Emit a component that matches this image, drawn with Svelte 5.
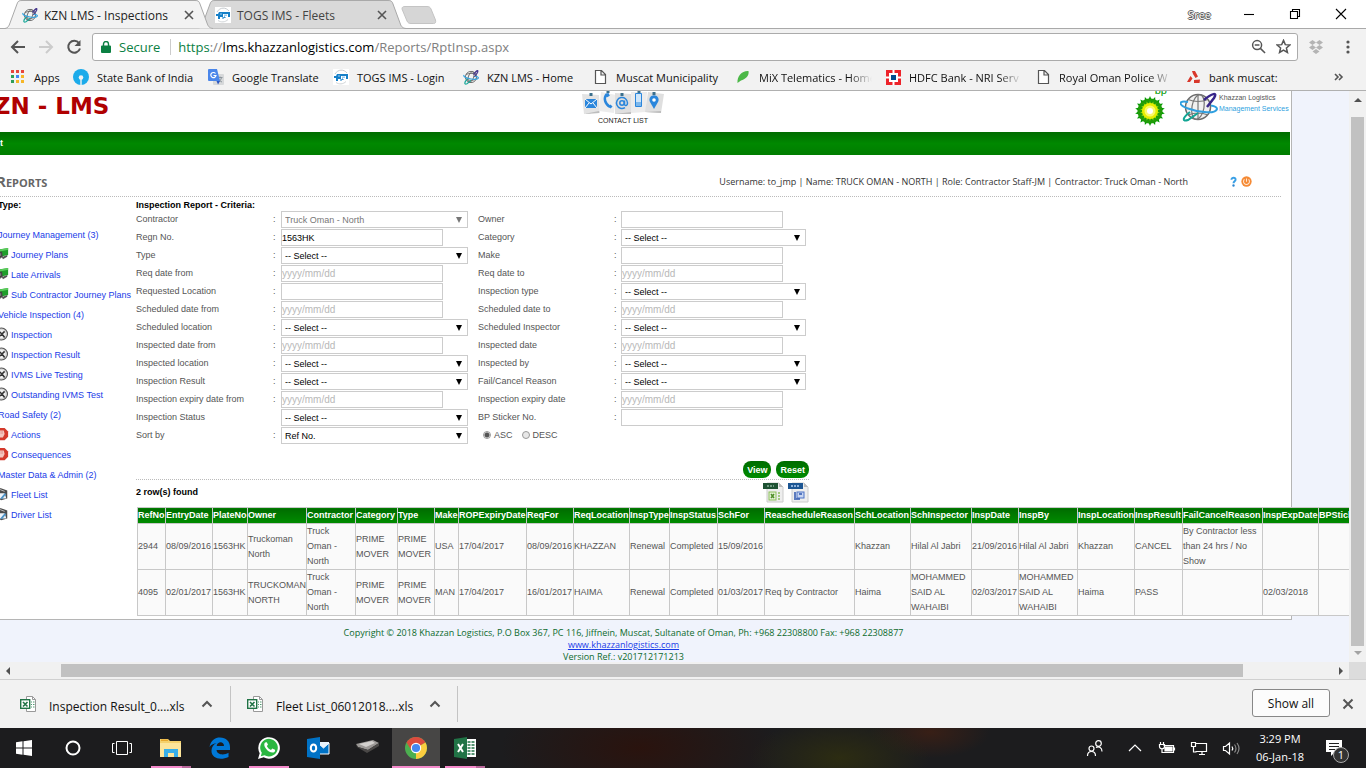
<script>
  const tabs = [
    { title: 'KZN LMS - Inspections', icon: 'globe', active: true },
    { title: 'TOGS IMS - Fleets', icon: 'togs', active: false }
  ]

  // space is the room each bookmark takes on the bar
  const bookmarks = [
    { title: 'Apps', icon: 'apps', space: 63 },
    { title: 'State Bank of India', icon: 'sbi', space: 135 },
    { title: 'Google Translate', icon: 'translate', space: 125 },
    { title: 'TOGS IMS - Login', icon: 'togs', space: 130 },
    { title: 'KZN LMS - Home', icon: 'globe', space: 129 },
    { title: 'Muscat Municipality', icon: 'page', space: 143 },
    { title: 'MiX Telematics - Home', icon: 'leaf', space: 150, fade: true },
    { title: 'HDFC Bank - NRI Serv', icon: 'hdfc', space: 150, fade: true },
    { title: 'Royal Oman Police W', icon: 'page', space: 150, fade: true },
    { title: 'bank muscat:', icon: 'muscat', space: 110 }
  ]

  const menu = [
    { title: 'Journey Management (3)' },
    { title: 'Journey Plans', icon: 'journey' },
    { title: 'Late Arrivals', icon: 'journey' },
    { title: 'Sub Contractor Journey Plans', icon: 'journey' },
    { title: 'Vehicle Inspection (4)' },
    { title: 'Inspection', icon: 'wheel' },
    { title: 'Inspection Result', icon: 'wheel' },
    { title: 'IVMS Live Testing', icon: 'wheel' },
    { title: 'Outstanding IVMS Test', icon: 'wheel' },
    { title: 'Road Safety (2)' },
    { title: 'Actions', icon: 'stop' },
    { title: 'Consequences', icon: 'stop' },
    { title: 'Master Data & Admin (2)' },
    { title: 'Fleet List', icon: 'data' },
    { title: 'Driver List', icon: 'data' }
  ]

  const any = '-- Select --'

  const fields = [
    { label: 'Contractor', type: 'select', value: 'Truck Oman - North', disabled: true },
    { label: 'Owner', type: 'text' },
    { label: 'Regn No.', type: 'text', value: '1563HK' },
    { label: 'Category', type: 'select', value: any },
    { label: 'Type', type: 'select', value: any },
    { label: 'Make', type: 'text' },
    { label: 'Req date from', type: 'date' },
    { label: 'Req date to', type: 'date' },
    { label: 'Requested Location', type: 'text' },
    { label: 'Inspection type', type: 'select', value: any },
    { label: 'Scheduled date from', type: 'date' },
    { label: 'Scheduled date to', type: 'date' },
    { label: 'Scheduled location', type: 'select', value: any },
    { label: 'Scheduled Inspector', type: 'select', value: any },
    { label: 'Inspected date from', type: 'date' },
    { label: 'Inspected date', type: 'date' },
    { label: 'Inspected location', type: 'select', value: any },
    { label: 'Inspected by', type: 'select', value: any },
    { label: 'Inspection Result', type: 'select', value: any },
    { label: 'Fail/Cancel Reason', type: 'select', value: any },
    { label: 'Inspection expiry date from', type: 'date' },
    { label: 'Inspection expiry date', type: 'date' },
    { label: 'Inspection Status', type: 'select', value: any, bare: true },
    { label: 'BP Sticker No.', type: 'text' },
    { label: 'Sort by', type: 'select', value: 'Ref No.' }
  ]

  const columns = [
    ['RefNo', 28], ['EntryDate', 47], ['PlateNo', 35], ['Owner', 59],
    ['Contractor', 49], ['Category', 42], ['Type', 37], ['Make', 24],
    ['ROPExpiryDate', 68], ['ReqFor', 47], ['ReqLocation', 56], ['InspType', 40],
    ['InspStatus', 48], ['SchFor', 47], ['ReascheduleReason', 90], ['SchLocation', 56],
    ['SchInspector', 61], ['InspDate', 47], ['InspBy', 59], ['InspLocation', 57],
    ['InspResult', 48], ['FailCancelReason', 80], ['InspExpDate', 56], ['BPSticker', 60]
  ]

  const rows = [
    ['2944', '08/09/2016', '1563HK', 'Truckoman North', 'Truck Oman - North', 'PRIME MOVER',
      'PRIME MOVER', 'USA', '17/04/2017', '08/09/2016', 'KHAZZAN', 'Renewal', 'Completed',
      '15/09/2016', '', 'Khazzan', 'Hilal Al Jabri', '21/09/2016', 'Hilal Al Jabri', 'Khazzan',
      'CANCEL', 'By Contractor less than 24 hrs / No Show', '', ''],
    ['4095', '02/01/2017', '1563HK', 'TRUCKOMAN NORTH', 'Truck Oman - North', 'PRIME MOVER',
      'PRIME MOVER', 'MAN', '17/04/2017', '16/01/2017', 'HAIMA', 'Renewal', 'Completed',
      '01/03/2017', 'Req by Contractor', 'Haima', 'MOHAMMED SAID AL WAHAIBI', '02/03/2017',
      'MOHAMMED SAID AL WAHAIBI', 'Haima', 'PASS', '', '02/03/2018', '']
  ]

  const tableWidth = columns.reduce((sum, c) => sum + c[1], 1)

  const downloads = ['Inspection Result_0....xls', 'Fleet List_06012018....xls']

  const apps = [
    { name: 'Start', icon: 'windows' },
    { name: 'Cortana', icon: 'cortana' },
    { name: 'Task View', icon: 'taskview' },
    { name: 'File Explorer', icon: 'explorer', state: 'many' },
    { name: 'Edge', icon: 'edge' },
    { name: 'WhatsApp', icon: 'whatsapp', state: 'open' },
    { name: 'Outlook', icon: 'outlook' },
    { name: 'Scanner', icon: 'scanner' },
    { name: 'Chrome', icon: 'chrome', state: 'current' },
    { name: 'Excel', icon: 'excel', state: 'many' }
  ]

  let order = 'ASC'
</script>

{#snippet icon(name)}
  <svg class="icon" viewBox="0 0 16 16" aria-hidden="true">
    {#if name === 'globe'}
      <g fill="none" stroke="#666" stroke-width="0.9">
        <circle cx="8" cy="8" r="5.6" />
        <ellipse cx="8" cy="8" rx="2.6" ry="5.6" transform="rotate(20 8 8)" />
        <path d="M3 5.500C6 4 10 4 13 5.500M2.600 9.500C6 12 10 12 13.400 9.500" />
      </g>
      <path d="M10.500 5.500C14 1 15.500 .5 14.500 3.500L11.500 8" fill="none" stroke="#4a3b8f" stroke-width="1.300" />
      <path d="M1 6C-1 9 14 12 15.500 9C15.500 8 13 7.500 12 7.500" fill="none" stroke="#35a4e0" stroke-width="1.200" />
      <path d="M4.500 10C1 13 1 16 4 14.800L8 11.500" fill="none" stroke="#1aa89a" stroke-width="1.200" />
    {:else if name === 'togs'}
      <rect width="16" height="16" fill="#fff" />
      <path d="M2 5C5 0 11 0 14 4" fill="none" stroke="#c6cbcf" />
      <path d="M4 5h11v5h-2V7H8v3H5v2H3V9H1V7h2z" fill="#1780c8" />
      <path d="M5 6.500h2v1H5zM9 7.500h3v1.500H9z" fill="#9ccdf0" />
      <path d="M7 11h2v-1h1v1" fill="none" stroke="#1780c8" />
      <path d="M3 13.500C6 15.500 10 15.500 13 12.500" fill="none" stroke="#d0d4d7" />
    {:else if name === 'apps'}
      {#each ['#e8453c', '#e8453c', '#e8453c', '#2f9e58', '#4285f4', '#f6b626', '#2f9e58', '#f6b626', '#f6b626'] as color, i}
        <rect x={1 + (i % 3) * 5} y={1 + Math.floor(i / 3) * 5} width="3" height="3" fill={color} />
      {/each}
    {:else if name === 'sbi'}
      <circle cx="8" cy="8" r="8" fill="#1cabea" />
      <circle cx="8" cy="8.500" r="2.300" fill="#f2f2f2" />
      <path d="M7.300 9h1.400v7H7.300z" fill="#f2f2f2" />
    {:else if name === 'translate'}
      <rect x="5" y="5" width="11" height="11" rx="1" fill="#d6d8da" />
      <path d="M9.500 8.500h5M12 7.500v1M13.500 8.500c-.5 2.500-2 4-3.500 4.500M10.500 9.500c.5 1.500 2 3 3.500 3.500" fill="none" stroke="#8b949b" />
      <path d="M1 0h8l3 12H1a1 1 0 0 1-1-1V1a1 1 0 0 1 1-1z" fill="#4a86ea" />
      <path d="M8.500 12H12l-2 3.500z" fill="#2b56c2" />
      <path d="M7.500 4.500A2.600 2.600 0 1 0 8 6.500H5.500" fill="none" stroke="#fff" stroke-width="1.200" />
    {:else if name === 'page'}
      <path d="M3.500 1.500h6l4 4v9h-10zM9 1.500v4.500h4.500" fill="#fff" stroke="#555" stroke-width="1.200" />
    {:else if name === 'leaf'}
      <path d="M2.500 14C2 7 7 1.500 13.500 2C14.500 7 10 10.500 6 11.500z" fill="#4cb848" />
    {:else if name === 'hdfc'}
      <rect x="1" y="1" width="15" height="15" fill="#ed232a" />
      <path d="M4 4h9v9H4z" fill="#fff" />
      <path d="M7.500 1h2v4h-2zM7.500 12h2v4h-2zM1 7.500h4v2H1zM12 7.500h4v2h-4z" fill="#fff" />
      <rect x="6" y="6" width="5" height="5" fill="#004c8f" />
    {:else if name === 'muscat'}
      <path d="M7 2h3l3 5.500-2.500 1.500L8 5zM5.500 7l2 2.500L5 13H2zM9 11l6-.5-.5 3.500H9z" fill="#d8372b" />
    {:else if name === 'journey'}
      <path d="M3 3l12-2V9L6 11z" fill="#1f9e2b" />
      <path d="M5 3l10-2v2L6 5z" fill="#5ccc5c" />
      <path d="M0 6l8-1 1 7-9 1z" fill="#444" />
      <path d="M1 8l6-1v3l-6 1z" fill="#777" />
      <circle cx="4" cy="12.500" r="2.200" fill="#222" />
      <path d="M8 11.500l6-2.500v2l-5 3z" fill="#555" />
    {:else if name === 'wheel'}
      <circle cx="7.500" cy="8" r="6.800" fill="#d4d4d4" stroke="#555" stroke-width="1.200" />
      <circle cx="7.500" cy="8" r="4.600" fill="#f2f2f2" />
      <path d="M4 4.500l4 3.500 3-3M8 8l3 4M8 8l-3.500 3" stroke="#333" stroke-width="1.800" fill="none" />
    {:else if name === 'stop'}
      <path d="M4 1h7l4 4v6l-4 4H4l-4-4V5z" fill="#d43a2c" />
      <path d="M3 4h7l1 4-2 4H5l-2-3z" fill="#f3c7c0" />
      <path d="M5.500 4v4M8 4v4" stroke="#e08a80" />
    {:else if name === 'data'}
      <path d="M1 7l5-6 8 3v9l-7 2-6-3z" fill="#4c4c4c" />
      <path d="M3 7h8l2 6H3z" fill="#eef4fa" />
      <path d="M6 13l5-6 2 1-5 6z" fill="#4f94c8" />
      <path d="M3 6l3-3 5 2" stroke="#ccc" fill="none" />
    {:else if name === 'help'}
      <path d="M5 5.500C5 1.500 11.500 1.500 11 5.500C10.800 7.500 8 8 8 10.500" fill="none" stroke="#3aa0e6" stroke-width="2.800" />
      <circle cx="8" cy="13.800" r="1.700" fill="#2c86d0" />
    {:else if name === 'power'}
      <circle cx="8" cy="8" r="7.500" fill="#f58a35" />
      <path d="M5 5a4.300 4.300 0 1 0 6 0M8 3.500v5" fill="none" stroke="#ffe9d6" stroke-width="1.500" />
    {:else if name === 'xls'}
      <path d="M6.500 .500h6l3 3v12h-9z" fill="#fff" stroke="#999" />
      <path d="M12.500 .500v3h3" fill="none" stroke="#999" />
      <path d="M11 6h1M13 6h1.500M11 8.500h1M13 8.500h1.500M11 11h1M13 11h1.500" stroke="#4f9a71" />
      <rect x="0.700" y="3.700" width="9" height="8.600" fill="#fff" stroke="#217346" stroke-width="1.400" />
      <path d="M3 6l4.500 4.500M7.500 6L3 10.500" stroke="#217346" stroke-width="1.600" />
    {/if}
  </svg>
{/snippet}

{#snippet appIcon(name)}
  <svg class="app-icon" viewBox="0 0 24 24" aria-hidden="true">
    {#if name === 'windows'}
      <path d="M4 6.300l6.500-1v6.200H4zM11.500 5.200L20 4v7.500h-8.500zM4 12.500h6.500v6.200l-6.500-1zM11.500 12.500H20V20l-8.500-1.200z" fill="#fff" />
    {:else if name === 'cortana'}
      <circle cx="12" cy="12" r="6.500" fill="none" stroke="#fff" stroke-width="2" />
    {:else if name === 'taskview'}
      <path d="M6.500 5.500h11v13h-11zM4.500 7.500h-2v9h2M19.500 7.500h2v9h-2" fill="none" stroke="#fff" />
    {:else if name === 'explorer'}
      <path d="M1 3h8l2 2h11v16H1z" fill="#f5d16c" />
      <path d="M1 7h21v14H1z" fill="#fde59a" />
      <path d="M2 3.500h7v1.500H2z" fill="#e8a92e" />
      <path d="M5 21v-8h14v8h-4v-4H9v4z" fill="#37aee8" />
    {:else if name === 'edge'}
      <path d="M1.500 11C3 4 7 1.500 12 1.500c6 0 10 4 10 9.500v3H8.500c.5 5 7.500 5.500 12 2.800v4.200C12 25 3 22 3.500 14.500c.2-3.500 2-6 5-7.500C6.500 7.300 3 8.500 1.500 11zM8.700 10h7.300c0-5-6.800-4.800-7.300 0z" fill="#0078d7" />
    {:else if name === 'whatsapp'}
      <path d="M1 23l1.700-5.700A10.800 10.800 0 1 1 6.700 21.300z" fill="#fff" />
      <path d="M3.800 20.200l1-3.500A8.800 8.800 0 1 1 7.500 19.200z" fill="#2bb741" />
      <path d="M8 6.500c-3 3 3.500 11 8.500 10 1.500-.5 1.800-2 1.500-2.800l-2.700-1.300-1.300 1.500c-2-.7-3.300-2-4.200-4L11 8.800 9.800 6.200z" fill="#fff" />
    {:else if name === 'outlook'}
      <path d="M12 6h11v12H12z" fill="#e8f2fb" />
      <path d="M12 7l5.500 5L23 7v11H12z" fill="#0072c6" stroke="#fff" />
      <path d="M1 3l13-2v22L1 21z" fill="#0072c6" />
      <ellipse cx="7.500" cy="12" rx="2.700" ry="3.600" fill="none" stroke="#fff" stroke-width="2" />
    {:else if name === 'scanner'}
      <path d="M1 8l17-4 6 3-11 7-10-3z" fill="#9b9896" />
      <path d="M4 8l13-3 3 2-9 4z" fill="#d2d0ce" />
      <path d="M1 8l1 3 10 6 12-7V7l-11 7-10-3z" fill="#4a4847" />
    {:else if name === 'chrome'}
      <circle cx="12" cy="12" r="11" fill="#4caf50" />
      <path d="M12 12L2.500 6.500A11 11 0 0 1 21.500 6.500z" fill="#dd4b3e" />
      <path d="M12 12L21.500 6.500A11 11 0 0 1 12 23z" fill="#fccd3f" />
      <path d="M2.500 6.500L7.500 14.500 12 12z" fill="#dd4b3e" />
      <path d="M12 23l4.500-8.500L12 12z" fill="#fccd3f" />
      <circle cx="12" cy="12" r="5.200" fill="#fff" />
      <circle cx="12" cy="12" r="4.100" fill="#4688f1" />
    {:else if name === 'excel'}
      <path d="M12 3h11v18H12z" fill="#fff" />
      <path d="M14.500 6h3M18.500 6h3M14.500 9h3M18.500 9h3M14.500 12h3M18.500 12h3M14.500 15h3M18.500 15h3M14.500 18h3M18.500 18h3" stroke="#217346" stroke-width="1.500" />
      <path d="M1 3l13-2v22L1 21z" fill="#217346" />
      <path d="M5 8l5 8M10 8l-5 8" stroke="#fff" stroke-width="2" />
    {/if}
  </svg>
{/snippet}

<div class="screen">
  <header class="browser">
    <div class="tab-strip">
      {#each tabs as tab}
        <div class="tab" class:active={tab.active}>
          <svg class="tab-shape" viewBox="0 0 208 29" preserveAspectRatio="none" aria-hidden="true">
            <path d="M0 28.500C3 28 4 26 5 23L12 4C13 1 14 .5 17 .5H190C193 .5 194 1 195 4L202 23C203 26 204 28 208 28.500" />
          </svg>
          {@render icon(tab.icon)}
          <span class="tab-title">{tab.title}</span>
          <button class="tab-close" aria-label="Close tab">
            <svg viewBox="0 0 10 10" aria-hidden="true"><path d="M1 1l8 8M9 1L1 9" /></svg>
          </button>
        </div>
      {/each}
      <button class="new-tab" aria-label="New tab">
        <svg viewBox="0 0 36 18" aria-hidden="true">
          <path d="M1 3C1 1 2 .5 4 .5H26C28 .5 29 1 30 3L34.500 14C35 16.500 34.500 17.500 32.500 17.500H10C8 17.500 7 17 6 15z" />
        </svg>
      </button>
      <div class="window-controls">
        <span class="profile">Sree</span>
        <button aria-label="Minimize"><svg viewBox="0 0 12 12"><path d="M1 6.500h10" /></svg></button>
        <button aria-label="Restore"><svg viewBox="0 0 12 12"><path d="M1.500 3.500h7v7h-7zM3.500 3.500v-2h7v7h-2" /></svg></button>
        <button aria-label="Close"><svg viewBox="0 0 12 12"><path d="M1 1l10 10M11 1L1 11" /></svg></button>
      </div>
    </div>

    <div class="toolbar">
      <button aria-label="Back"><svg viewBox="0 0 16 16"><path d="M15 8H2M8 2L2 8l6 6" /></svg></button>
      <button class="off" aria-label="Forward" disabled><svg viewBox="0 0 16 16"><path d="M1 8h13M8 2l6 6-6 6" /></svg></button>
      <button aria-label="Reload"><svg viewBox="0 0 16 16"><path d="M13 4A6 6 0 1 0 14 9.500" /><path d="M14.500 1v6h-6z" class="solid" /></svg></button>
      <div class="omnibox">
        <svg class="lock" viewBox="0 0 10 12" aria-hidden="true">
          <path d="M1 4.500h8a1 1 0 0 1 1 1V11a1 1 0 0 1-1 1H1a1 1 0 0 1-1-1V5.500a1 1 0 0 1 1-1z" fill="#0b8043" />
          <path d="M2.500 5V3a2.500 2.500 0 0 1 5 0v2" fill="none" stroke="#0b8043" stroke-width="1.400" />
        </svg>
        <span class="secure">Secure</span>
        <span class="url"><span class="scheme">https</span>://<span class="host">lms.khazzanlogistics.com</span>/Reports/RptInsp.aspx</span>
        <button aria-label="Zoom"><svg viewBox="0 0 16 16"><circle cx="6.500" cy="6.500" r="4.800" /><path d="M10 10l5 5M4 6.500h5" /></svg></button>
        <button aria-label="Bookmark this page"><svg viewBox="0 0 16 16"><path d="M8 1.500l1.900 4.500 4.900.4-3.700 3.200 1.100 4.800L8 11.900l-4.200 2.500 1.100-4.800L1.200 6.400l4.900-.4z" /></svg></button>
      </div>
      <button class="dropbox" aria-label="Dropbox">
        <svg viewBox="0 0 16 16"><path d="M4.500 1L8 3.500 4.500 6 1 3.500zM11.500 1L15 3.500 11.500 6 8 3.500zM4.500 6L8 8.500 4.500 11 1 8.500zM11.500 6L15 8.500 11.500 11 8 8.500zM8 10l3.500 2.500L8 15l-3.500-2.500z" /></svg>
      </button>
      <button class="more" aria-label="Menu">
        <svg viewBox="0 0 16 16"><circle cx="8" cy="3" r="1.600" /><circle cx="8" cy="8" r="1.600" /><circle cx="8" cy="13" r="1.600" /></svg>
      </button>
    </div>

    <nav class="bookmarks" aria-label="Bookmarks">
      {#each bookmarks as b}
        <a href="#bookmark" style:width="{b.space}px">
          {@render icon(b.icon)}
          <span class:fade={b.fade}>{b.title}</span>
        </a>
      {/each}
      <button class="overflow" aria-label="More bookmarks">
        <svg viewBox="0 0 10 8"><path d="M1 1l3 3-3 3M5 1l3 3-3 3" /></svg>
      </button>
    </nav>
  </header>

  <div class="viewport">
    <div class="page">
      <div class="site">
        <div class="masthead">
          <h1>KZN - LMS</h1>
          <a class="contact" href="#contact">
            <svg viewBox="0 0 84 24" aria-hidden="true">
              <path d="M1 3l17 1 1 18-16 1z" fill="#e3e3e3" />
              <path d="M20 1l15 3-2 18-15-2z" fill="#ececec" />
              <path d="M34 2l16 1v20H34z" fill="#dfdfdf" />
              <path d="M50 1h16l-1 20-15 1z" fill="#ececec" />
              <path d="M67 1l16 2-3 19-16-1z" fill="#dfdfdf" />
              <path d="M18 20v2l-15 1zM50 21v2H34zM80 20v2l-16-1z" fill="#bdbdbd" />
              <path d="M4 8h12v9H4z" fill="#2a86dc" />
              <path d="M4 8l6 5 6-5M4 17l4-5M16 17l-4-5" fill="none" stroke="#fff" />
              <path d="M26 3c-4 4-2 10 3 13" fill="none" stroke="#2a86dc" stroke-width="2.500" />
              <path d="M26 2.500l1.500 3M28.500 16.500l2-2" stroke="#2a86dc" stroke-width="3" />
              <circle cx="41" cy="12" r="2.200" fill="none" stroke="#2a86dc" stroke-width="1.500" />
              <path d="M43.500 9.500v4c1 2 3 1 3-1.500a5.500 5.500 0 1 0-2.500 4.600" fill="none" stroke="#2a86dc" stroke-width="1.500" />
              <path d="M54.500 2.500h6v13h-6z" fill="#cfe6fa" stroke="#2a86dc" />
              <path d="M55 11h5v4h-5z" fill="#7db8ec" />
              <path d="M73 18l-4-7a4.600 4.600 0 1 1 8 0z" fill="#2a86dc" />
              <circle cx="73" cy="9" r="1.800" fill="#fff" />
              <path d="M10 2v3M27 0v2M41 2v3M58 0v2M73 1v3" stroke="#3b6f8c" stroke-width="3" />
            </svg>
            <span>CONTACT LIST</span>
          </a>
          <div class="brands">
            <div class="bp">
              <span>bp</span>
              <svg viewBox="0 0 32 30" aria-hidden="true">
                {#each Array(18) as _, i}
                  <path d="M16 0l3.500 8h-7z" fill="#009a00" transform="rotate({i * 20} 16 15)" />
                {/each}
                <circle cx="16" cy="15" r="12.500" fill="#1f9c08" />
                {#each Array(18) as _, i}
                  <path d="M16 5l2 6h-4z" fill="#a5d80c" transform="rotate({i * 20} 16 15)" />
                {/each}
                <circle cx="16" cy="15" r="8" fill="#e6ee00" />
                <circle cx="16" cy="15" r="5.500" fill="#fbf96a" />
                <circle cx="16" cy="15" r="3" fill="#fff" />
              </svg>
            </div>
            <div class="khazzan">
              <svg viewBox="0 0 38 30" aria-hidden="true">
                <circle cx="18" cy="15" r="12.500" fill="#f1f1f1" stroke="#6b6b6b" stroke-width="1.500" />
                <g fill="none" stroke="#777" stroke-width="1.200">
                  <ellipse cx="18" cy="15" rx="6" ry="12.500" transform="rotate(10 18 15)" />
                  <path d="M18 2.500v25M8 7.500q10 4 20 0M8 23q10-4 20 0" />
                </g>
                <path d="M24 8C32 1 38 0 34 6L27 15" fill="none" stroke="#39268a" stroke-width="2.500" />
                <path d="M8 10C-2 8-2 13 8 16.500 20 21 36 22 37 17c0-2-3-3-6-3.500" fill="none" stroke="#2f9fe0" stroke-width="2" />
                <path d="M10 20C2 26 2 30 8 28L18 21" fill="none" stroke="#12a594" stroke-width="2" />
              </svg>
              <p>Khazzan Logistics <span>Management Services</span></p>
            </div>
          </div>
        </div>

        <nav class="green-bar" aria-label="Main"><a href="#list">t</a></nav>

        <div class="title-row">
          <h2>Reports</h2>
          <p>Username: to_jmp | Name: TRUCK OMAN - NORTH | Role: Contractor Staff-JM | Contractor: Truck Oman - North</p>
          <button aria-label="Help">{@render icon('help')}</button>
          <button aria-label="Log out">{@render icon('power')}</button>
        </div>

        <div class="columns">
          <aside>
            <h3>Type:</h3>
            <ul>
              {#each menu as item}
                <li class:child={item.icon}>
                  {#if item.icon}{@render icon(item.icon)}{/if}
                  <a href="#report">{item.title}</a>
                </li>
              {/each}
            </ul>
          </aside>

          <main>
            <h3>Inspection Report - Criteria:</h3>
            <form class="criteria" on:submit|preventDefault>
              {#each fields as f, i}
                <label for="field-{i}">{f.label}</label>
                <span class="colon">{f.bare ? '' : ':'}</span>
                {#if f.type === 'select'}
                  <div class="select" class:disabled={f.disabled}>
                    <select id="field-{i}" disabled={f.disabled}>
                      <option>{f.value}</option>
                    </select>
                  </div>
                {:else}
                  <input
                    id="field-{i}"
                    type="text"
                    value={f.value ?? ''}
                    placeholder={f.type === 'date' ? 'yyyy/mm/dd' : ''}
                  />
                {/if}
              {/each}
              <div class="order">
                <label><input type="radio" value="ASC" bind:group={order} />ASC</label>
                <label><input type="radio" value="DESC" bind:group={order} />DESC</label>
              </div>
            </form>

            <div class="actions">
              <button>View</button>
              <button>Reset</button>
            </div>

            <div class="found">
              <strong>2 row(s) found</strong>
              <button class="export" aria-label="Export to XLS">
                <svg viewBox="0 0 21 21" aria-hidden="true">
                  <path d="M4 1h12l4 4v15H4z" fill="#eee" stroke="#ccc" />
                  <path d="M16 1v4h4z" fill="#bbb" />
                  <rect y="1" width="15" height="6" fill="#1e5233" />
                  <path d="M4 4h7" stroke="#6f9980" stroke-dasharray="2 1" stroke-width="2" />
                  <rect x="6" y="10" width="7" height="8" fill="#e6f3d8" stroke="#8bbf5c" />
                  <path d="M8 12l3 4M11 12l-3 4" stroke="#4f8f28" stroke-width="1.500" />
                  <path d="M15 11h2M15 14h2M15 17h2" stroke="#8bbf5c" stroke-width="1.500" />
                </svg>
              </button>
              <button class="export" aria-label="Export to DOCX">
                <svg viewBox="0 0 21 21" aria-hidden="true">
                  <path d="M4 1h12l4 4v15H4z" fill="#eee" stroke="#ccc" />
                  <path d="M16 1v4h4z" fill="#bbb" />
                  <rect y="1" width="15" height="6" fill="#1c5592" />
                  <path d="M3 4h9" stroke="#8db1da" stroke-dasharray="2 1" stroke-width="2" />
                  <rect x="9" y="10" width="7" height="6" fill="#c8d6f2" stroke="#4d72c4" />
                  <path d="M7 10v8M11 12h3M8 17h4" fill="none" stroke="#2c55ae" stroke-width="1.500" />
                </svg>
              </button>
            </div>

            <table style:width="{tableWidth}px">
              <colgroup>
                {#each columns as c}<col style:width="{c[1]}px" />{/each}
              </colgroup>
              <thead>
                <tr>
                  {#each columns as c}<th>{c[0]}</th>{/each}
                </tr>
              </thead>
              <tbody>
                {#each rows as row}
                  <tr>
                    {#each row as cell}<td>{cell}</td>{/each}
                  </tr>
                {/each}
              </tbody>
            </table>
          </main>
        </div>
      </div>

      <footer>
        <p>Copyright © 2018 Khazzan Logistics, P.O Box 367, PC 116, Jiffnein, Muscat, Sultanate of Oman, Ph: +968 22308800 Fax: +968 22308877</p>
        <p><a href="#home">www.khazzanlogistics.com</a></p>
        <p>Version Ref.: v201712171213</p>
      </footer>
    </div>

    <div class="scroll-y" aria-hidden="true">
      <svg viewBox="0 0 8 4"><path d="M0 4l4-4 4 4z" fill="#505050" /></svg>
      <div class="thumb"></div>
      <svg viewBox="0 0 8 4"><path d="M0 0l4 4 4-4z" fill="#a3a3a3" /></svg>
    </div>
    <div class="scroll-x" aria-hidden="true">
      <svg viewBox="0 0 4 8"><path d="M4 0L0 4l4 4z" fill="#505050" /></svg>
      <div class="thumb"></div>
      <svg viewBox="0 0 4 8"><path d="M0 0l4 4-4 4z" fill="#505050" /></svg>
    </div>
    <div class="corner"></div>
  </div>

  <section class="downloads" aria-label="Downloads">
    {#each downloads as file}
      <div class="download">
        {@render icon('xls')}
        <span>{file}</span>
        <button aria-label="File options"><svg viewBox="0 0 12 8"><path d="M1.500 6.500L6 2l4.500 4.500" /></svg></button>
      </div>
    {/each}
    <button class="show-all">Show all</button>
    <button class="close-bar" aria-label="Close downloads"><svg viewBox="0 0 12 12"><path d="M1.500 1.500l9 9M10.500 1.500l-9 9" /></svg></button>
  </section>

  <div class="taskbar">
    {#each apps as app}
      <button class="app {app.state ?? ''}" aria-label={app.name}>{@render appIcon(app.icon)}</button>
    {/each}
    <div class="tray">
      <svg class="people" viewBox="0 0 18 18" aria-hidden="true">
        <circle cx="12.500" cy="4.500" r="2.800" /><circle cx="5.500" cy="9.500" r="2.500" />
        <path d="M10 8.500c3-1.500 6 0 6 4M1.500 17c0-6 8-6 8 0" />
      </svg>
      <svg viewBox="0 0 18 18" aria-hidden="true"><path d="M3 12l6-6 6 6" /></svg>
      <svg viewBox="0 0 18 18" aria-hidden="true">
        <path d="M5.500 6.500h10v7h-9M16.500 8.500v3M1.500 5.500h5v2c0 3-5 3-5 0zM2.500 3v2M5.500 3v2M4 10v3.500h3" />
        <path d="M7 8h7v4H7z" fill="#fff" />
      </svg>
      <svg viewBox="0 0 18 18" aria-hidden="true">
        <path d="M5.500 4.500h11v8h-11M9 15.500h6M12 13v2.500M1.500 3.500h4v4h-4zM3.500 8v5h3" />
      </svg>
      <svg viewBox="0 0 18 18" aria-hidden="true">
        <path d="M1.500 7.500h2l4-3.500v11l-4-3.500h-2zM10 7.500q1.500 2 0 4" />
        <path d="M12.500 5.500q3 4 0 8M15 4q4 5.500 0 11" stroke="#888" />
      </svg>
      <div class="clock"><span>3:29 PM</span><span>06-Jan-18</span></div>
      <div class="notices">
        <svg viewBox="0 0 18 18" aria-hidden="true">
          <path d="M1 1h16v12h-7l-4 4v-4H1z" fill="#fff" stroke="none" />
          <path d="M4 4.500h10M4 7.500h10M4 10.500h6" stroke="#222" />
        </svg>
        <span>1</span>
      </div>
    </div>
  </div>
</div>

<style>
  :global(body) {
    background: #f0f3fc;
  }

  .screen {
    display: flex;
    flex-direction: column;
    height: 100vh;
    overflow: hidden;
    font-family: 'Open Sans', 'Noto Sans', sans-serif;
    font-size: 11px;
    color: #111;
  }

  button {
    display: flex;
    align-items: center;
    justify-content: center;
    flex: none;
    margin: 0;
    padding: 0;
    border: 0;
    background: none;
    font: inherit;
    color: inherit;
  }

  h1, h2, h3, p, ul {
    margin: 0;
    padding: 0;
  }

  .icon {
    flex: none;
    width: 16px;
    height: 16px;
  }

  /* Browser frame */
  .browser {
    flex: none;
    background: #f2f2f2;
    border-bottom: 1px solid #b0b0b0;
  }

  .tab-strip {
    display: flex;
    height: 29px;
    padding-left: 5px;
    background: linear-gradient(#fff 28px, #a9a9a9 28px);
  }

  .tab {
    position: relative;
    display: flex;
    align-items: center;
    box-sizing: border-box;
    width: 208px;
    margin-right: -15px;
    padding: 1px 17px 0;
    gap: 6px;
    color: #444;
    font-size: 12px;
  }

  .tab.active {
    z-index: 1;
    color: #222;
  }

  .tab-shape {
    position: absolute;
    left: 0;
    top: 0;
    width: 100%;
    height: 29px;
    fill: #d9d9d9;
    stroke: #a9a9a9;
  }

  .tab.active .tab-shape {
    fill: #f2f2f2;
  }

  .tab > .icon,
  .tab-title,
  .tab-close {
    z-index: 1;
  }

  .tab-title {
    flex: 1;
    white-space: nowrap;
  }

  .tab-close svg {
    width: 10px;
    height: 10px;
    margin-right: 2px;
    stroke: #555;
    stroke-width: 1.6;
  }

  .new-tab {
    align-self: flex-start;
    margin: 6px 0 0 10px;
  }

  .new-tab svg {
    width: 36px;
    height: 18px;
    fill: #d6d6d6;
    stroke: #c4c4c4;
  }

  .window-controls {
    display: flex;
    align-items: center;
    height: 28px;
    margin: 0 2px 0 auto;
  }

  .window-controls button {
    width: 46px;
    height: 27px;
  }

  .window-controls svg {
    width: 12px;
    height: 12px;
    fill: none;
    stroke: #000;
    stroke-width: 1.1;
  }

  .profile {
    margin-right: 15px;
    color: #fff;
    text-shadow: 1px 0 #555, -1px 0 #555, 0 1px #555, 0 -1px #555;
  }

  .toolbar {
    display: flex;
    align-items: center;
    height: 35px;
    padding: 0 10px;
    gap: 12px;
  }

  .toolbar svg {
    width: 16px;
    height: 16px;
    fill: none;
    stroke: #555;
    stroke-width: 2;
  }

  .toolbar .off svg {
    stroke: #ccc;
  }

  .toolbar .solid {
    fill: #555;
    stroke: none;
  }

  .omnibox {
    flex: 1;
    display: flex;
    align-items: center;
    box-sizing: border-box;
    height: 28px;
    margin: 0 -2px 0 -2px;
    padding: 0 6px 0 8px;
    border: 1px solid #ababab;
    border-radius: 3px;
    background: #fff;
    font-size: 13px;
  }

  .omnibox .lock {
    width: 10px;
    height: 12px;
    stroke: none;
  }

  .secure {
    margin: 0 10px 0 8px;
    padding-right: 10px;
    border-right: 1px solid #ccc;
    line-height: 16px;
    color: #0b8043;
  }

  .url {
    flex: 1;
    margin-left: -3px;
    white-space: nowrap;
    color: #808080;
  }

  .scheme {
    color: #0b8043;
  }

  .host {
    color: #000;
  }

  .omnibox button {
    margin-left: 10px;
  }

  .omnibox button svg {
    width: 15px;
    height: 15px;
    stroke-width: 1.6;
  }

  .dropbox svg,
  .more svg {
    stroke: none;
    fill: #b4b4b4;
  }

  .more {
    margin: 0 0 0 4px;
  }

  .more svg {
    fill: #555;
  }

  .bookmarks {
    display: flex;
    align-items: center;
    height: 26px;
    padding-left: 10px;
    align-content: start;
  }

  .bookmarks a {
    display: flex;
    align-items: center;
    flex: none;
    gap: 8px;
    color: #111;
    text-decoration: none;
    white-space: nowrap;
  }

  .bookmarks .fade {
    width: 113px;
    overflow: hidden;
    mask-image: linear-gradient(to right, #000 90px, transparent 113px);
  }

  .overflow {
    margin: 0 22px 0 auto;
  }

  .overflow svg {
    width: 10px;
    height: 8px;
    fill: none;
    stroke: #555;
    stroke-width: 1.6;
  }

  /* Web page with its scroll bars */
  .viewport {
    flex: 1;
    min-height: 0;
    display: grid;
    grid-template: minmax(0, 1fr) 17px / minmax(0, 1fr) 17px;
  }

  .page {
    overflow: hidden;
    background: #f0f3fc;
    font-family: 'Liberation Sans', Arial, sans-serif;
    font-size: 9px;
    color: #555;
  }

  /* scrolled a little to the right, so the left edge is cut off */
  .site,
  footer {
    margin: 0 57px 0 -45px;
  }

  .site {
    padding-bottom: 3px;
    border: solid #b5b5b5;
    border-width: 0 1px 1px 0;
    background: #fff;
  }

  .masthead {
    display: grid;
    grid-template-columns: 1fr auto 1fr;
    height: 41px;
  }

  h1 {
    padding-left: 21px;
    font: bold 23px/30px 'DejaVu Sans', sans-serif;
    color: #b00000;
    white-space: nowrap;
  }

  .contact {
    display: flex;
    flex-direction: column;
    align-items: center;
    font-size: 7px;
    line-height: 12px;
    color: #222;
    text-decoration: none;
  }

  .contact svg {
    width: 84px;
    height: 24px;
  }

  .brands {
    display: flex;
    justify-content: flex-end;
    gap: 13px;
    padding-right: 4px;
  }

  .bp {
    display: flex;
    flex-direction: column;
    align-items: flex-end;
    margin-top: -7px;
    font-size: 11px;
    line-height: 12px;
    color: #009a00;
  }

  .bp svg {
    width: 34px;
    height: 30px;
  }

  .khazzan {
    display: flex;
    gap: 1px;
  }

  .khazzan svg {
    width: 38px;
    height: 32px;
  }

  .khazzan p {
    width: 68px;
    padding-top: 1px;
    font-size: 7px;
    line-height: 11px;
    white-space: nowrap;
  }

  .khazzan span {
    display: block;
    color: #2f9fe0;
  }

  .green-bar {
    height: 23px;
    margin-right: 1px;
    padding-left: 45px;
    background: linear-gradient(#006c00, #008800 50%, #007d00);
    line-height: 22px;
  }

  .green-bar a {
    font-weight: bold;
    color: #fff;
    text-decoration: none;
  }

  .title-row {
    display: flex;
    align-items: center;
    box-sizing: border-box;
    height: 42px;
    margin-right: 10px;
    padding: 11px 29px 0 41px;
    border-bottom: 1px dotted #bbb;
    font-family: 'Open Sans', sans-serif;
    color: #333;
  }

  .title-row h2 {
    flex: 1;
    font-size: 15px;
    font-variant: small-caps;
    color: #666;
  }

  .title-row p {
    margin-right: 38px;
    font-size: 9px;
  }

  .title-row .icon {
    width: 11px;
    height: 11px;
    margin-left: 2px;
  }

  .columns {
    display: flex;
    min-width: 0;
  }

  h3 {
    padding-top: 2px;
    font-size: 9px;
    line-height: 12px;
    color: #000;
  }

  aside {
    flex: none;
    box-sizing: border-box;
    width: 181px;
    padding-left: 43px;
  }

  aside ul {
    margin-top: 14px;
    list-style: none;
  }

  aside li {
    display: flex;
    align-items: center;
    height: 20px;
    gap: 2px;
    white-space: nowrap;
  }

  aside li.child {
    margin-left: -3px;
  }

  aside .icon {
    width: 14px;
    height: 14px;
    margin-bottom: 3px;
  }

  aside a {
    color: #1a3ce8;
    text-decoration: none;
  }

  main {
    flex: 1;
    min-width: 0;
  }

  .criteria {
    display: grid;
    grid-template-columns: 137px 8px 197px 136px 7px 185px;
    grid-auto-rows: 18px;
  }

  .criteria > label,
  .colon {
    line-height: 16px;
    white-space: nowrap;
  }

  .criteria > input,
  .select {
    box-sizing: border-box;
    height: 17px;
    border: 1px solid #ccc;
    background: #fff;
  }

  .criteria > input {
    width: 162px;
    padding: 0;
    font: inherit;
    color: #000;
    outline: 0;
  }

  .criteria > input::placeholder {
    font-size: 10px;
    color: #b8b8b8;
  }

  .select {
    position: relative;
    width: 187px;
    max-width: 100%;
  }

  .select select {
    display: block;
    width: 100%;
    height: 15px;
    padding: 1px 3px 0;
    border: 0;
    appearance: none;
    background: none;
    font: inherit;
    color: #000;
    opacity: 1;
  }

  .select::after {
    content: '';
    position: absolute;
    top: 5px;
    right: 5px;
    border: solid transparent;
    border-width: 6px 3px 0;
    border-top-color: #000;
    pointer-events: none;
  }

  .select.disabled select {
    color: #777;
  }

  .select.disabled::after {
    border-top-color: #777;
  }

  .order {
    display: flex;
    grid-column: span 3;
    align-items: center;
    gap: 9px;
    height: 16px;
    padding-left: 5px;
  }

  .order label {
    display: flex;
    align-items: center;
    gap: 3px;
  }

  .order input {
    width: 8px;
    height: 8px;
    margin: 0;
    appearance: none;
    border: 1px solid #999;
    border-radius: 50%;
    background: #e8e8e8;
    box-sizing: border-box;
  }

  .order input:checked {
    background: radial-gradient(#555 2px, #eee 3px);
  }

  .actions {
    display: flex;
    justify-content: flex-end;
    gap: 5px;
    width: 673px;
    margin-top: 16px;
    padding-bottom: 1px;
    border-bottom: 1px dotted #bbb;
  }

  .actions button {
    height: 17px;
    padding: 0 4px;
    border-radius: 8px;
    background: linear-gradient(#006c00, #008c00);
    font-weight: bold;
    color: #fff;
  }

  .found {
    display: flex;
    align-items: center;
    gap: 4px;
    width: 673px;
    height: 27px;
    box-sizing: border-box;
    padding-bottom: 3px;
    color: #000;
  }

  .found strong {
    flex: 1;
  }

  .export svg {
    width: 21px;
    height: 21px;
  }

  table {
    margin-left: 1px;
    border-collapse: collapse;
    table-layout: fixed;
    background: #fafafa;
  }

  th, td {
    padding: 0;
    border: 1px solid #c8c8c8;
    text-align: left;
    line-height: 15px;
  }

  th {
    background: linear-gradient(#006c00, #008c00);
    color: #fff;
    white-space: nowrap;
  }

  footer {
    padding-top: 7px;
    font: 9px/12px 'Open Sans', sans-serif;
    text-align: center;
    color: #0c6a2c;
  }

  footer a {
    color: #1a3ce8;
  }

  .scroll-y,
  .scroll-x {
    display: flex;
    align-items: center;
    justify-content: space-between;
    background: #f1f1f1;
  }

  .scroll-y {
    flex-direction: column;
    padding: 7px 0;
  }

  .scroll-y svg {
    width: 8px;
    height: 4px;
  }

  .scroll-y .thumb {
    flex: 1;
    width: 13px;
    margin: 15px 0 5px;
    background: #c1c1c1;
  }

  .scroll-x {
    padding: 0 6px;
  }

  .scroll-x svg {
    width: 4px;
    height: 8px;
  }

  .scroll-x .thumb {
    flex: 1;
    height: 13px;
    margin: 0 96px 0 51px;
    background: #c1c1c1;
  }

  .corner {
    background: #dcdcdc;
  }

  /* Download shelf */
  .downloads {
    display: flex;
    align-items: center;
    flex: none;
    box-sizing: border-box;
    height: 49px;
    padding-right: 12px;
    border-top: 1px solid #d0d0d0;
    background: #f2f2f2;
    font-size: 12px;
  }

  .download {
    display: flex;
    align-items: center;
    box-sizing: border-box;
    width: 227px;
    height: 36px;
    padding-left: 16px;
    border-right: 1px solid #c4c4c4;
  }

  .download:first-child {
    width: 231px;
    padding-left: 20px;
  }

  .download span {
    margin: 4px 16px 0 13px;
    white-space: nowrap;
  }

  .download svg:last-child,
  .close-bar svg {
    width: 12px;
    fill: none;
    stroke: #555;
    stroke-width: 2;
  }

  .show-all {
    height: 28px;
    width: 78px;
    margin: 0 12px 2px auto;
    border: 1px solid #888;
    border-radius: 3px;
    background: #fcfcfc;
  }

  /* Taskbar */
  .taskbar {
    display: flex;
    flex: none;
    height: 40px;
    background:
      radial-gradient(90px 40px at 840px 30px, #2c2c12, transparent),
      radial-gradient(60px 26px at 930px 4px, #381f16, transparent),
      radial-gradient(140px 60px at 640px 20px, #2a130e, transparent),
      #1c1c1e;
    color: #fff;
  }

  .app {
    position: relative;
    width: 48px;
    margin-right: 1px;
  }

  .app-icon {
    width: 24px;
    height: 24px;
  }

  .app.current {
    background: #474645;
  }

  .app.open::after,
  .app.many::after,
  .app.current::after {
    content: '';
    position: absolute;
    inset: auto 4px 0;
    height: 2px;
    background: #f48acb;
  }

  .app.current::after {
    inset: auto 0 0;
  }

  .app.many::after {
    background: linear-gradient(to right, #f48acb 31px, #b9689b 31px);
  }

  .tray {
    display: flex;
    align-items: center;
    margin-left: auto;
  }

  .tray > svg {
    width: 18px;
    height: 18px;
    margin-right: 14px;
    fill: none;
    stroke: #fff;
    stroke-width: 1.2;
  }

  .tray .people {
    margin-right: 22px;
  }

  .clock {
    display: flex;
    flex-direction: column;
    align-items: center;
    width: 52px;
    line-height: 18px;
    white-space: nowrap;
  }

  .notices {
    position: relative;
    height: 18px;
    margin: 0 23px 0 19px;
  }

  .notices svg {
    width: 18px;
    height: 18px;
  }

  .notices span {
    position: absolute;
    left: 8px;
    top: 8px;
    width: 14px;
    height: 14px;
    border: 1px solid #aaa;
    border-radius: 50%;
    background: #333;
    line-height: 14px;
    text-align: center;
  }
</style>
